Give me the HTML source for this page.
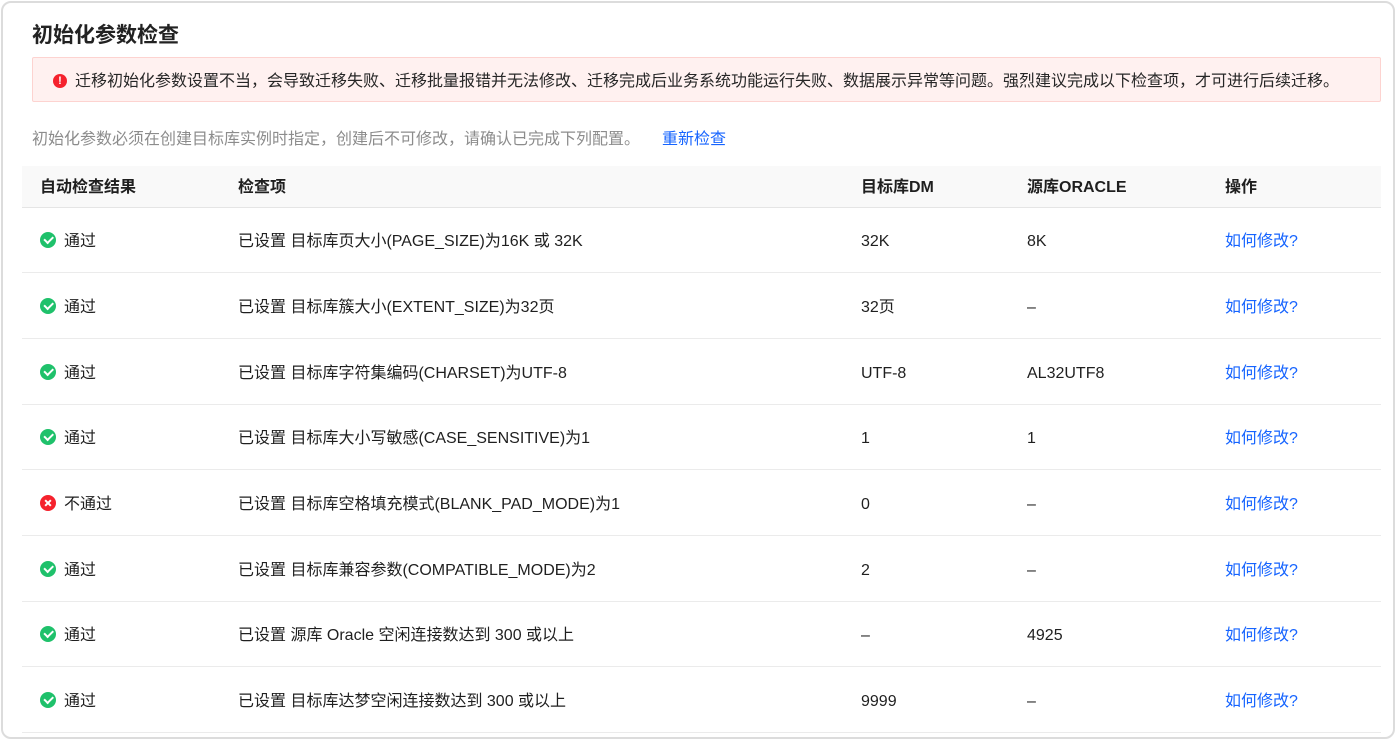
<!DOCTYPE html>
<html><head><meta charset="utf-8"><style>
*{margin:0;padding:0;box-sizing:border-box}
body{width:1396px;height:740px;background:#fff;font-family:"Liberation Sans","Noto Sans CJK SC",sans-serif;color:#1f1f1f;overflow:hidden;position:relative}
.card{position:absolute;left:1px;top:1px;width:1394px;height:738px;border:2px solid #dcdcdc;border-radius:10px}
h1{position:absolute;left:32px;top:19px;font-size:21px;font-weight:bold;color:#222}
.alert{position:absolute;left:32px;top:57px;width:1349px;height:45px;background:#fff1f0;border:1px solid #fdd3d0;border-radius:2px;font-size:16px;line-height:47px;padding-left:42px;color:#262626;white-space:nowrap}
.alert .ic{position:absolute;left:20px;top:16px;width:14px;height:14px;border-radius:50%;background:#f5222d;color:#fff;font-size:11px;line-height:14px;text-align:center;font-weight:bold}
.sub{position:absolute;left:32px;top:125px;font-size:16px;color:#8c8c8c}
.sub a{color:#1664ff;margin-left:22px;text-decoration:none}
.th{position:absolute;left:22px;top:166px;width:1359px;height:42px;background:#f9f9f9;border-bottom:1px solid #e5e5e5;font-size:16px;font-weight:bold}
.row{position:absolute;left:22px;width:1359px;height:66px;border-bottom:1px solid #ebebeb;font-size:16px}
.c{position:absolute;top:0;white-space:nowrap}
.th .c{line-height:44px}
.row .c{line-height:70px}
.ok,.no{display:inline-block;width:16px;height:16px;border-radius:50%;vertical-align:-2px;margin-right:8px;position:relative}
.ok{background:#1fc16b}.no{background:#f5222d}
.ok:after{content:"";position:absolute;left:4px;top:4px;width:7px;height:3.5px;border-left:2px solid #fff;border-bottom:2px solid #fff;transform:rotate(-45deg)}
.no:before,.no:after{content:"";position:absolute;left:7px;top:4px;width:2px;height:8px;background:#fff;transform:rotate(45deg)}
.no:after{transform:rotate(-45deg)}
.lk{color:#1664ff}
</style></head><body>
<div class="card"></div>
<h1>初始化参数检查</h1>
<div class="alert"><span class="ic">!</span>迁移初始化参数设置不当，会导致迁移失败、迁移批量报错并无法修改、迁移完成后业务系统功能运行失败、数据展示异常等问题。强烈建议完成以下检查项，才可进行后续迁移。</div>
<div class="sub">初始化参数必须在创建目标库实例时指定，创建后不可修改，请确认已完成下列配置。<a>重新检查</a></div>
<div class="th"><span class="c" style="left:18px">自动检查结果</span><span class="c" style="left:216px">检查项</span><span class="c" style="left:839px">目标库DM</span><span class="c" style="left:1005px">源库ORACLE</span><span class="c" style="left:1203px">操作</span></div>

<div class="row" style="top:207px"><span class="c" style="left:18px"><i class="ok"></i>通过</span><span class="c" style="left:216px">已设置 目标库页大小(PAGE_SIZE)为16K 或 32K</span><span class="c" style="left:839px">32K</span><span class="c" style="left:1005px">8K</span><span class="c lk" style="left:1203px">如何修改?</span></div>
<div class="row" style="top:273px"><span class="c" style="left:18px"><i class="ok"></i>通过</span><span class="c" style="left:216px">已设置 目标库簇大小(EXTENT_SIZE)为32页</span><span class="c" style="left:839px">32页</span><span class="c" style="left:1005px">–</span><span class="c lk" style="left:1203px">如何修改?</span></div>
<div class="row" style="top:339px"><span class="c" style="left:18px"><i class="ok"></i>通过</span><span class="c" style="left:216px">已设置 目标库字符集编码(CHARSET)为UTF-8</span><span class="c" style="left:839px">UTF-8</span><span class="c" style="left:1005px">AL32UTF8</span><span class="c lk" style="left:1203px">如何修改?</span></div>
<div class="row" style="top:404px"><span class="c" style="left:18px"><i class="ok"></i>通过</span><span class="c" style="left:216px">已设置 目标库大小写敏感(CASE_SENSITIVE)为1</span><span class="c" style="left:839px">1</span><span class="c" style="left:1005px">1</span><span class="c lk" style="left:1203px">如何修改?</span></div>
<div class="row" style="top:470px"><span class="c" style="left:18px"><i class="no"></i>不通过</span><span class="c" style="left:216px">已设置 目标库空格填充模式(BLANK_PAD_MODE)为1</span><span class="c" style="left:839px">0</span><span class="c" style="left:1005px">–</span><span class="c lk" style="left:1203px">如何修改?</span></div>
<div class="row" style="top:536px"><span class="c" style="left:18px"><i class="ok"></i>通过</span><span class="c" style="left:216px">已设置 目标库兼容参数(COMPATIBLE_MODE)为2</span><span class="c" style="left:839px">2</span><span class="c" style="left:1005px">–</span><span class="c lk" style="left:1203px">如何修改?</span></div>
<div class="row" style="top:601px"><span class="c" style="left:18px"><i class="ok"></i>通过</span><span class="c" style="left:216px">已设置 源库 Oracle 空闲连接数达到 300 或以上</span><span class="c" style="left:839px">–</span><span class="c" style="left:1005px">4925</span><span class="c lk" style="left:1203px">如何修改?</span></div>
<div class="row" style="top:667px"><span class="c" style="left:18px"><i class="ok"></i>通过</span><span class="c" style="left:216px">已设置 目标库达梦空闲连接数达到 300 或以上</span><span class="c" style="left:839px">9999</span><span class="c" style="left:1005px">–</span><span class="c lk" style="left:1203px">如何修改?</span></div>
</body></html>
